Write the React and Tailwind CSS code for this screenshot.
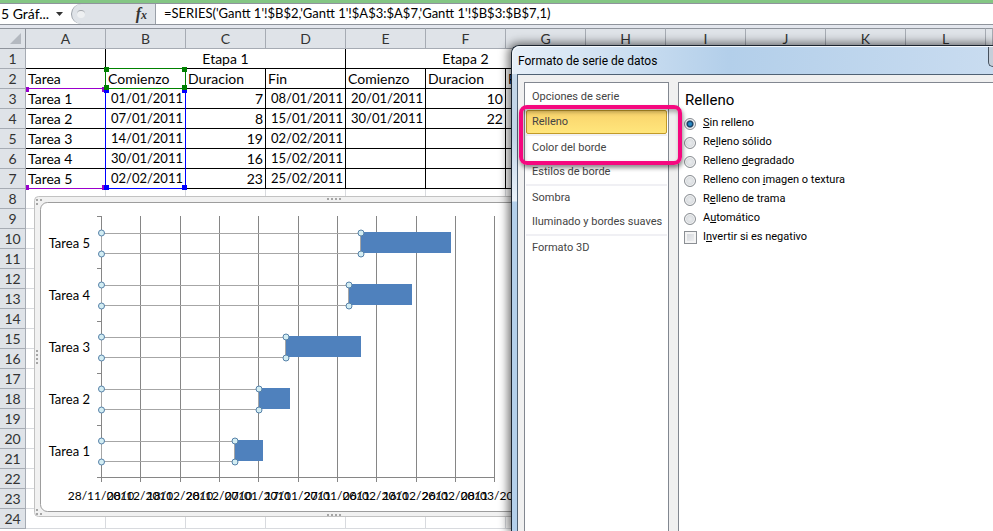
import { useState } from "react";

// The last, unnamed column fills what is left of the window
const columns = ["A", "B", "C", "D", "E", "F", "G", "H", "I", "J", "K", "L", ""];

const tasks = [
  ["Tarea 1", "01/01/2011", "7", "08/01/2011", "20/01/2011", "10"],
  ["Tarea 2", "07/01/2011", "8", "15/01/2011", "30/01/2011", "22"],
  ["Tarea 3", "14/01/2011", "19", "02/02/2011", "", ""],
  ["Tarea 4", "30/01/2011", "16", "15/02/2011", "", ""],
  ["Tarea 5", "02/02/2011", "23", "25/02/2011", "", ""],
];

const bars = [
  { name: "Tarea 5", y: 232, start: 361, end: 451 },
  { name: "Tarea 4", y: 284, start: 349, end: 412 },
  { name: "Tarea 3", y: 336, start: 286, end: 361 },
  { name: "Tarea 2", y: 388, start: 259, end: 290 },
  { name: "Tarea 1", y: 440, start: 235, end: 263 },
];

const dates = [
  { x: 101, label: "28/11/2010" },
  { x: 140, label: "08/12/2010" },
  { x: 180, label: "18/12/2010" },
  { x: 219, label: "28/12/2010" },
  { x: 258, label: "07/01/2011" },
  { x: 298, label: "17/01/2011" },
  { x: 337, label: "27/01/2011" },
  { x: 376, label: "06/02/2011" },
  { x: 416, label: "16/02/2011" },
  { x: 455, label: "26/02/2011" },
  { x: 494, label: "08/03/2011" },
];

const fills = [
  ["", "S", "in relleno"],
  ["Re", "l", "leno sólido"],
  ["Relleno ", "d", "egradado"],
  ["Relleno con ", "i", "magen o textura"],
  ["R", "e", "lleno de trama"],
  ["A", "u", "tomático"],
];

const sections = [
  { name: "Opciones de serie", style: "h-6" },
  { name: "Relleno", style: "h-6 mt-px" },
  { name: "Color del borde", style: "h-6 border-t-2 border-[#f0f0f4] box-content" },
  { name: "Estilos de borde", style: "h-6" },
  { name: "Sombra", style: "h-6 border-t-2 border-[#f0f0f4] box-content" },
  { name: "Iluminado y bordes suaves", style: "h-6" },
  { name: "Formato 3D", style: "h-6 border-t-2 border-[#f0f0f4] box-content" },
];

function FormulaBar() {
  return (
    <div className="flex h-7 border-t-3 border-[#84c684] bg-[#e4e7ee] text-black">
      <div className="flex h-[22px] w-full border-y border-[#8f949c] bg-white">
        <button className="flex w-[71px] items-center justify-between pr-2 pl-px text-sm whitespace-nowrap">
          <span>5 Gráf...</span>
          <svg width="7" height="4" viewBox="0 0 7 4">
            <path d="M0 0h7L3.500 4z" fill="#333" />
          </svg>
        </button>
        <div className="flex w-[85px] items-center justify-between rounded-l-full border-r border-l border-[#9aa0a8] bg-[#dfe3e8] pr-1 pl-[5px]">
          <span className="size-2 rounded-full border-t border-[#a5a9ae] bg-[#eef0f2]" />
          <button
            aria-label="Insertar función"
            className="pr-1 font-['Liberation_Serif',serif] text-base leading-4 font-bold text-[#333] italic"
          >
            f<span className="text-xs">x</span>
          </button>
        </div>
        <input
          aria-label="Barra de fórmulas"
          className="min-w-0 flex-1 pl-2 text-[13px] outline-none"
          defaultValue="=SERIES('Gantt 1'!$B$2,'Gantt 1'!$A$3:$A$7,'Gantt 1'!$B$3:$B$7,1)"
        />
      </div>
    </div>
  );
}

function Cell({ children, right, grid, span }) {
  const isDate = typeof children === "string" && children.includes("/");

  return (
    <td
      colSpan={span}
      className={`h-5 border-r border-b p-0 whitespace-nowrap ${
        grid ? "border-black" : "border-[#d8dade]"
      } ${right ? "pr-[2px] text-right" : span ? "text-center" : "pl-[2px]"} ${
        isDate ? "text-[13px]" : ""
      }`}
    >
      {children}
    </td>
  );
}

function RowHeader({ n }) {
  return (
    <th className="h-5 border-r border-b border-[#a6abb3] bg-[#dfe3e8] p-0 text-center font-normal text-[#333]">
      {n}
    </th>
  );
}

function Sheet() {
  const rest = columns.slice(7);

  return (
    <table className="w-full table-fixed border-separate border-spacing-0 text-sm leading-[19px] text-black">
      <colgroup>
        <col className="w-[26px]" />
        {columns.map((c) => (
          <col key={c} className={c ? "w-20" : ""} />
        ))}
      </colgroup>
      <thead>
        <tr>
          <th className="h-[21px] border-t border-r border-b border-[#8f949c] bg-[#dfe3e8] p-0">
            <svg className="mr-1 ml-auto" width="11" height="11" viewBox="0 0 11 11">
              <path d="M11 0v11H0z" fill="#b4b9c0" />
            </svg>
          </th>
          {columns.map((c) => (
            <th
              key={c}
              className="h-[21px] border-t border-r border-b border-[#a6abb3] border-t-[#8f949c] bg-[#dfe3e8] p-0 font-normal text-[#333]"
            >
              {c}
            </th>
          ))}
        </tr>
      </thead>
      <tbody>
        <tr>
          <RowHeader n={1} />
          <Cell grid />
          <Cell grid span={3}>Etapa 1</Cell>
          <Cell grid span={3}>Etapa 2</Cell>
          {rest.map((c) => <Cell key={c} />)}
        </tr>
        <tr>
          <RowHeader n={2} />
          {["Tarea", "Comienzo", "Duracion", "Fin", "Comienzo", "Duracion", "Fin"].map((t, i) => (
            <Cell key={i} grid>{t}</Cell>
          ))}
          {rest.map((c) => <Cell key={c} />)}
        </tr>
        {tasks.map((row, r) => (
          <tr key={row[0]}>
            <RowHeader n={r + 3} />
            {row.map((t, i) => (
              <Cell key={i} grid right={i > 0}>{t}</Cell>
            ))}
            <Cell grid />
            {rest.map((c) => <Cell key={c} />)}
          </tr>
        ))}
        {Array.from({ length: 17 }, (_, r) => (
          <tr key={r}>
            <RowHeader n={r + 8} />
            {columns.map((c) => <Cell key={c} />)}
          </tr>
        ))}
      </tbody>
    </table>
  );
}

// Coloured outlines round the ranges that feed the selected series
function RangeOutlines() {
  const handles = [
    { x: 26, y: 87, fill: "#9900cc" },
    { x: 102, y: 87, fill: "#9900cc" },
    { x: 26, y: 185, fill: "#9900cc" },
    { x: 102, y: 185, fill: "#9900cc" },
    { x: 104, y: 88, fill: "#0000ff" },
    { x: 182, y: 88, fill: "#0000ff" },
    { x: 104, y: 185, fill: "#0000ff" },
    { x: 182, y: 185, fill: "#0000ff" },
    { x: 104, y: 67, fill: "#008000" },
    { x: 182, y: 67, fill: "#008000" },
    { x: 104, y: 85, fill: "#008000" },
    { x: 182, y: 85, fill: "#008000" },
  ];

  return (
    <svg
      className="pointer-events-none absolute top-0 left-0"
      width="200"
      height="200"
      shapeRendering="crispEdges"
      fill="none"
    >
      <path d="M26 88.500H105M26 188.500H105" stroke="#9900cc" />
      <path d="M105.500 89V188.500H185.500V89" stroke="#0000ff" />
      <path d="M105.500 68.500H185.500V88.500H105.500z" stroke="#008000" />
      {handles.map((h, i) => (
        <rect key={i} x={h.x} y={h.y} width={h.x === 26 ? 3 : 5} height="5" fill={h.fill} />
      ))}
    </svg>
  );
}

function GanttChart() {
  return (
    <svg
      className="absolute top-0 left-0"
      width="560"
      height="531"
      role="img"
      aria-label="Diagrama de Gantt"
    >
      <rect x="34.500" y="196.500" width="540" height="320" rx="4" fill="#f1f1f1" stroke="#c2c2c2" />
      <rect x="40.500" y="202.500" width="540" height="309" rx="7" fill="#fff" stroke="#9d9d9d" />
      <g fill="#a5a5a5">
        {[0, 4, 8, 12].map((d) => (
          <g key={d}>
            <rect x={327 + d} y="198" width="2" height="2" />
            <rect x={327 + d} y="514" width="2" height="2" />
            <rect x="36" y={350 + d} width="2" height="2" />
          </g>
        ))}
        <path d="M36 199h2v2h-2zM40 199h2v2h-2zM36 203h2v2h-2zM36 509h2v2h-2zM36 513h2v2h-2zM40 513h2v2h-2z" />
      </g>

      {/* Grid and axes */}
      <g stroke="#868686" shapeRendering="crispEdges">
        {dates.map((d) => (
          <line key={d.x} x1={d.x + 0.5} x2={d.x + 0.5} y1="216" y2="482" />
        ))}
        <line x1="97" x2="495" y1="477.500" y2="477.500" />
        {[216, 268, 321, 373, 425].map((y) => (
          <line key={y} x1="97" x2="101" y1={y + 0.5} y2={y + 0.5} />
        ))}
      </g>

      {bars.map((b) => (
        <g key={b.name}>
          <text x="90" y={b.y + 16} fontSize="13" textAnchor="end">{b.name}</text>
          <rect x={b.start} y={b.y} width={b.end - b.start} height="21" fill="#4f81bd" />
          <rect x="101.500" y={b.y + 1.5} width={b.start - 102} height="20" fill="none" stroke="#a6a6a6" />
          {[101.5, b.start].map((x) =>
            [b.y + 1, b.y + 22].map((y) => (
              <circle key={`${x}-${y}`} cx={x} cy={y} r="3" fill="#d3edf3" stroke="#5681a8" />
            ))
          )}
        </g>
      ))}

      {dates.map((d) => (
        <text key={d.label} x={d.x} y="500" fontSize="12" textAnchor="middle">{d.label}</text>
      ))}
    </svg>
  );
}

function FormatDialog() {
  const [section, setSection] = useState("Relleno");
  const [fill, setFill] = useState(0);

  return (
    <div
      role="dialog"
      aria-labelledby="dialog-title"
      className="absolute top-[45px] right-0 bottom-0 left-[511px] flex flex-col rounded-tl-lg border-t border-l border-[#1c2530] bg-[linear-gradient(#c3d6e8,#c3d6e8_90px,#eaf2fa_155px,#b4d0eb_156px)] pl-[5px] font-[Roboto,sans-serif] shadow-[-1px_0_10px_2px_rgba(0,0,0,0.55)]"
    >
      <div className="-ml-[5px] flex h-7 items-center rounded-tl-lg border-t border-l border-white/80 bg-linear-to-r from-[#e6eff8] via-[#b3cfea] via-45% to-[#c9dcf0] pl-[5px]">
        <h1 id="dialog-title" className="flex-1 text-xs text-black">
          Formato de serie de datos
        </h1>
        <button
          aria-label="Cerrar"
          className="h-5 w-[5px] self-start rounded-bl-md border-b border-l border-[#46515e] bg-[#c5ced9]"
        />
      </div>

      <div className="flex min-h-0 flex-1 gap-[9px] border-t border-l border-[#4f6174] bg-[#f0f0f0] pt-[7px] pl-[6px] text-[11px]">
        <nav className="flex w-[145px] flex-col border border-b-0 border-[#828790] bg-white px-px pt-[2px] text-[#444]">
          {sections.map((s) => (
            <button
              key={s.name}
              onClick={() => setSection(s.name)}
              className={`shrink-0 text-left whitespace-nowrap ${s.style} ${
                section === s.name
                  ? "rounded-xs border border-[#c29b29] bg-linear-to-b from-[#f9d36b] to-[#ffe67c] pl-[5px]"
                  : "pl-[6px]"
              }`}
            >
              {s.name}
            </button>
          ))}
        </nav>

        <form className="flex-1 border-t border-l border-[#828790] bg-white pt-[7px] pl-[5px] text-black">
          <h2 className="h-6 pl-px text-[15px] leading-5">Relleno</h2>
          {fills.map(([before, key, after], i) => (
            <label key={i} className="flex h-[19px] items-center gap-[7px]">
              <input
                type="radio"
                name="fill"
                checked={fill === i}
                onChange={() => setFill(i)}
                className="size-3 appearance-none rounded-full border border-[#8b8f94] bg-[#dcdfe2] bg-radial from-[#e9ebed] to-[#cdd1d5] shadow-[inset_0_0_0_1px_#f6f6f6] checked:from-[#2a8ac4] checked:from-20% checked:via-[#12395c] checked:via-40% checked:to-[#dfe3e6] checked:to-60%"
              />
              <span className="whitespace-pre">
                {before}<u>{key}</u>{after}
              </span>
            </label>
          ))}
          <label className="flex h-[19px] items-center gap-[6px]">
            <input
              type="checkbox"
              className="size-[13px] appearance-none border border-[#8b8f94] bg-linear-to-br from-[#cfd3d8] to-[#f3f3f4] shadow-[inset_0_0_0_2px_#f4f4f4]"
            />
            <span>I<u>n</u>vertir si es negativo</span>
          </label>
        </form>
      </div>

      {/* Highlight round the two options to change */}
      <div className="pointer-events-none absolute top-[59px] left-[7px] h-[60px] w-[163px] rounded-lg border-4 border-[#f5087f] shadow-[1px_3px_4px_rgba(0,0,0,0.45),inset_1px_3px_4px_rgba(0,0,0,0.3)]" />
    </div>
  );
}

function App() {
  return (
    <main className="relative h-screen overflow-hidden bg-white font-[Lato,sans-serif]">
      <FormulaBar />
      <Sheet />
      <RangeOutlines />
      <GanttChart />
      <FormatDialog />
    </main>
  );
}

export default App;
